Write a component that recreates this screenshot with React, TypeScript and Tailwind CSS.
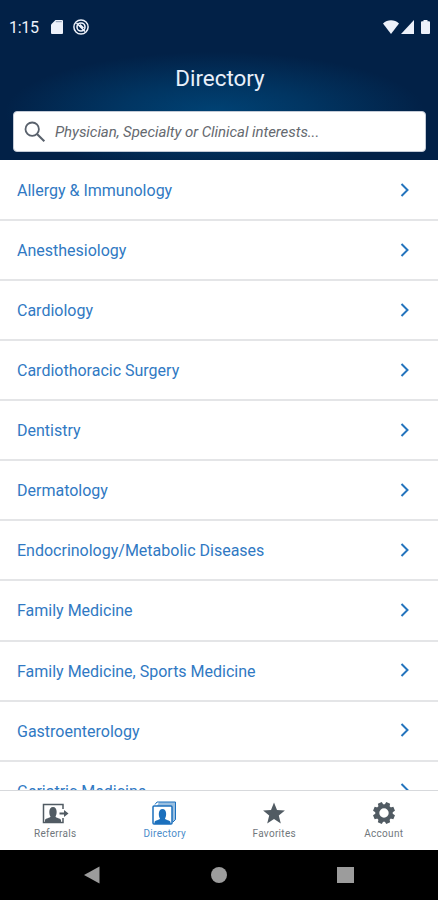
import React from "react";

const specialties = [
  "Allergy & Immunology",
  "Anesthesiology",
  "Cardiology",
  "Cardiothoracic Surgery",
  "Dentistry",
  "Dermatology",
  "Endocrinology/Metabolic Diseases",
  "Family Medicine",
  "Family Medicine, Sports Medicine",
  "Gastroenterology",
  "Geriatric Medicine",
];

function StatusBar() {
  return (
    <div className="flex h-[54px] items-center pl-[9px] pr-[8px] text-[#edf1fa]">
      <span className="w-[42px] pt-px text-[16px] leading-5 tracking-[-0.3px]">1:15</span>
      <svg className="h-[14px] w-[12px]" viewBox="0 0 12 14" fill="currentColor">
        <path d="M4.5 0H11a1 1 0 0 1 1 1v12a1 1 0 0 1-1 1H1a1 1 0 0 1-1-1V4.5z" />
        <path d="M4.8 1.7h6" stroke="#8392aa" strokeWidth=".9" />
      </svg>
      <svg className="ml-[10px] h-4 w-4" viewBox="0 0 16 16" fill="none" stroke="currentColor">
        <circle cx="8" cy="8" r="7.1" strokeWidth="1.5" />
        <circle cx="8" cy="8" r="4" strokeWidth="1.6" />
        <path d="M3.5 4l8.5 8.5M7 5.5l3.5 3.5" strokeWidth="1.5" />
      </svg>
      <svg className="ml-auto h-[14px] w-[16px]" viewBox="0 0 16 14" fill="currentColor">
        <path d="M0 3.5C4.5-.9 11.5-.9 16 3.5L8 14z" />
      </svg>
      <svg className="ml-[2px] h-[14px] w-[13px]" viewBox="0 0 13 14" fill="currentColor">
        <path d="M13 0v14H0z" />
      </svg>
      <svg className="ml-[7px] h-[14px] w-[9px]" viewBox="0 0 9 14" fill="currentColor">
        <path d="M2.500 0h4v1.300H8a1 1 0 0 1 1 1V13a1 1 0 0 1-1 1H1a1 1 0 0 1-1-1V2.300a1 1 0 0 1 1-1h1.500z" />
      </svg>
    </div>
  );
}

function Header() {
  return (
    <header className="flex h-[160px] shrink-0 flex-col bg-[#022147] bg-[radial-gradient(ellipse_210px_60px_at_215px_112px,#004274_0%,#013562_45%,#022147_100%)]">
      <StatusBar />
      <h1 className="h-[57px] pl-[2px] pt-[10px] text-center text-[22.4px] leading-7 text-[#e9f0fa]">Directory</h1>
      <div className="ml-[13px] mr-3 flex h-[41px] items-center rounded-[4px] border border-[#c3cad6] bg-white pl-[10px]">
        <svg className="h-[22px] w-[22px]" viewBox="0 0 22 22" fill="none" stroke="#59616c" strokeWidth="1.8">
          <circle cx="8.200" cy="8.200" r="6.700" />
          <path d="M13 13l7.300 7.300" strokeWidth="2.100" />
        </svg>
        <span className="ml-[9px] whitespace-nowrap text-[15px] italic leading-5 tracking-[-0.06px] text-[#65696f]">
          Physician, Specialty or Clinical interests...
        </span>
      </div>
    </header>
  );
}

function Row({ label }: { label: string }) {
  return (
    <li className="flex h-[60.070px] shrink-0 items-center justify-between border-b-2 border-[#e4e5e7] pl-[17px] pr-[28px]">
      <span className="pt-[2px] text-[16px] leading-5 text-[#3079c3]">{label}</span>
      <svg className="mb-px h-[14px] w-[10px]" viewBox="0 0 10 14" fill="none" stroke="#2474bd" strokeWidth="2">
        <path d="M1.500 1l6 6-6 6" />
      </svg>
    </li>
  );
}

function Portrait() {
  return (
    <path
      fill="currentColor"
      stroke="none"
      d="M3 19v-2c0-1.700 5.500-2 5.500-3.500-1.600-1.800-2.200-9.500 2.500-9.500s4.100 7.700 2.500 9.500C13.500 15 19 15.300 19 17v2z"
    />
  );
}

function ReferralsIcon() {
  return (
    <svg className="ml-[2px] h-[21px] w-[27px]" viewBox="0 0 27 21" fill="none" stroke="currentColor" strokeWidth="1.500">
      <path d="M21 6V1.500H1.500v18H21V15" />
      <Portrait />
      <path d="M17.500 10.500H24" strokeWidth="2" />
      <path d="M22 7l4.500 3.500L22 14z" fill="currentColor" stroke="none" />
    </svg>
  );
}

function DirectoryIcon() {
  return (
    <svg className="ml-px h-[24px] w-[25px]" viewBox="0 0 25 24" fill="none" stroke="currentColor" strokeWidth="1.500">
      <path d="M5 5 7 1h17v17.500L20 22V5z" fill="currentColor" fillOpacity=".45" stroke="none" />
      <path d="M3 3.500 5 1h18.500v17.500L21 21" strokeWidth="1" />
      <rect x="1" y="5" width="19" height="18" rx="1" fill="white" />
      <g transform="translate(-.500 4)">
        <Portrait />
      </g>
    </svg>
  );
}

function StarIcon() {
  return (
    <svg className="ml-px h-[22px] w-[22px]" viewBox="0 0 22 22" fill="currentColor">
      <path d="M11 .5l3 7.600 7.900.5-6.100 5 2 7.900L11 17.100 4.200 21.500l2-7.900-6.100-5L8 8.100z" />
    </svg>
  );
}

function GearIcon() {
  return (
    <svg className="ml-[2px] h-[22px] w-[22px]" viewBox="0 0 22 22" fill="none">
      <circle cx="11" cy="11" r="6.700" stroke="currentColor" strokeWidth="4" />
      <g fill="currentColor">
        {[22.5, 67.5, 112.5, 157.5, 202.5, 247.5, 292.5, 337.5].map((angle) => (
          <path key={angle} d="M8.200 4l.700-4h4.200l.700 4z" transform={`rotate(${angle} 11 11)`} />
        ))}
      </g>
    </svg>
  );
}

const tabs = [
  { label: "Referrals", icon: <ReferralsIcon />, active: false },
  { label: "Directory", icon: <DirectoryIcon />, active: true },
  { label: "Favorites", icon: <StarIcon />, active: false },
  { label: "Account", icon: <GearIcon />, active: false },
];

export default function App() {
  return (
    <div className="flex h-[900px] w-[438px] flex-col overflow-hidden bg-white font-[Roboto,sans-serif]">
      <Header />
      <ul className="flex h-[630px] shrink-0 flex-col overflow-hidden pt-px">
        {specialties.map((label) => (
          <Row key={label} label={label} />
        ))}
      </ul>
      <nav className="grid h-[60px] shrink-0 grid-cols-4 border-t border-[#d7d9dc]">
        {tabs.map(({ label, icon, active }) => (
          <div key={label} className={active ? "flex flex-col items-center text-[#1c70bd]" : "flex flex-col items-center text-[#515b63]"}>
            <div className="flex h-[35px] items-center pt-[9px]">{icon}</div>
            <span className={active ? "pl-px text-[10px] leading-[16px] tracking-[0.3px] text-[#4b8cca]" : "pl-px text-[10px] leading-[16px] tracking-[0.3px] text-[#71777c]"}>{label}</span>
          </div>
        ))}
      </nav>
      <div className="flex h-[50px] shrink-0 items-center bg-black pl-[84px] text-[#9c9c9c]">
        <svg className="h-[18px] w-[16px]" viewBox="0 0 16 18" fill="currentColor">
          <path d="M15.500.5v17L0 9z" />
        </svg>
        <div className="ml-[111px] h-4 w-4 rounded-full bg-[#9c9c9c]" />
        <div className="ml-[110px] h-4 w-[17px] bg-[#9c9c9c]" />
      </div>
    </div>
  );
}
